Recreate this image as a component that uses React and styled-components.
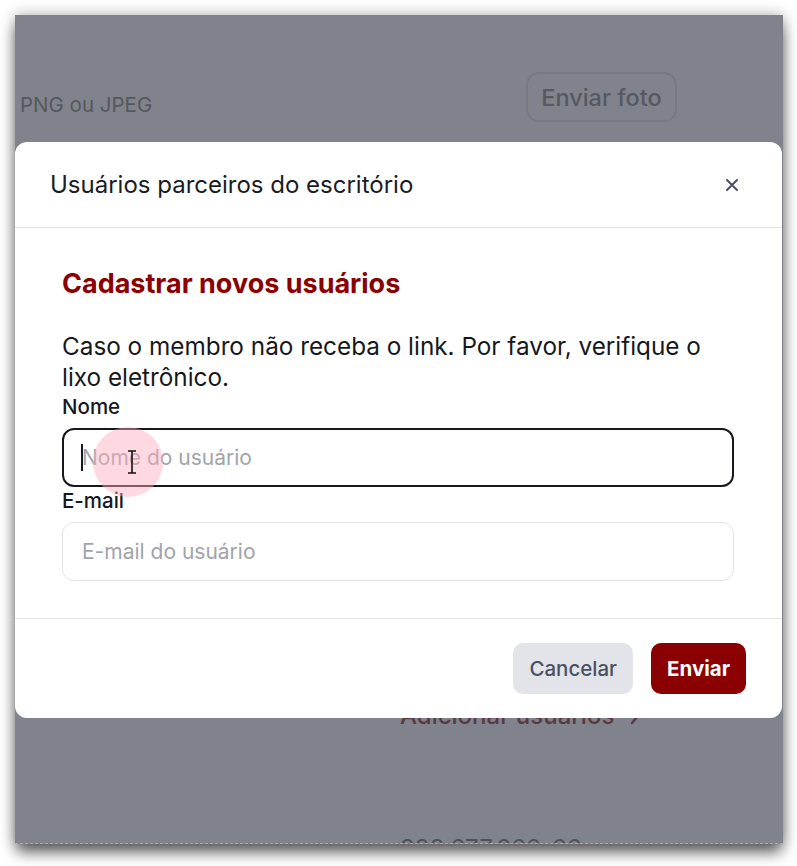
import React from "react";
import styled, { createGlobalStyle } from "styled-components";

const Global = createGlobalStyle`
  html, body { margin: 0; padding: 0; background: #ffffff; }
  body { font-family: Inter, "Noto Sans", sans-serif; }
  * { box-sizing: border-box; }
`;

const Stage = styled.div`
  width: 797px;
  height: 866px;
  padding: 15px 14px 0 15px;
  background: #ffffff;
`;

const Window = styled.div`
  position: relative;
  width: 768px;
  height: 829px;
  overflow: hidden;
  background: #80838b;
  border-bottom: 1px dashed #a6a9af;
  box-shadow: 0 10px 14px -2px rgba(0, 0, 0, 0.6), 0 0 14px rgba(0, 0, 0, 0.3);
  display: flex;
  flex-direction: column;
`;

const TopRow = styled.div`
  margin-top: 57px;
  height: 50px;
  display: flex;
  justify-content: space-between;
  padding: 0 106px 0 5px;
`;

const FaintText = styled.span`
  align-self: flex-end;
  margin-bottom: 5px;
  font-size: 20.5px;
  line-height: 24px;
  color: #55585f;
`;

const GhostButton = styled.div`
  width: 151px;
  height: 50px;
  border: 2px solid #767980;
  border-radius: 13px;
  display: flex;
  align-items: center;
  justify-content: center;
  font-size: 23.5px;
  font-weight: 500;
  color: #56595f;
`;

const LinkRow = styled.div`
  margin-top: 580px;
  padding-left: 385px;
  display: flex;
  align-items: center;
  gap: 14px;
  font-size: 24px;
  font-weight: 500;
  line-height: 28px;
  color: #5a3a42;
`;

const Divider = styled.div`
  margin-top: 43px;
  height: 1px;
  background: #74777f;
`;

const CpfRow = styled.div`
  margin-top: 62px;
  padding-left: 385px;
  font-size: 24px;
  line-height: 28px;
  color: #4f525a;
`;

const Modal = styled.div`
  position: absolute;
  top: 127px;
  left: 0;
  width: 767px;
  background: #ffffff;
  border-radius: 12px;
  display: flex;
  flex-direction: column;
`;

const Header = styled.div`
  height: 86px;
  padding: 0 40px 0 35px;
  display: flex;
  align-items: center;
  justify-content: space-between;
  border-bottom: 1px solid #e4e4e7;
`;

const HeaderTitle = styled.h2`
  margin: 0;
  font-size: 24px;
  line-height: 30px;
  font-weight: 400;
  color: #1a1d24;
`;

const CloseButton = styled.button`
  border: 0;
  background: none;
  padding: 0;
  width: 20px;
  height: 20px;
  display: flex;
  align-items: center;
  justify-content: center;
  color: #4b5060;
`;

const Body = styled.div`
  height: 390px;
  padding: 41px 48px 0 47px;
  display: flex;
  flex-direction: column;
`;

const SectionTitle = styled.h3`
  margin: 0;
  font-size: 27px;
  line-height: 30px;
  font-weight: 700;
  color: #8b0000;
`;

const Description = styled.p`
  margin: 32px 0 0;
  font-size: 24.3px;
  line-height: 31px;
  color: #16181d;
`;

const Label = styled.label`
  display: block;
  margin-top: ${(p) => p.$top}px;
  font-size: 20.5px;
  line-height: 24px;
  font-weight: 500;
  color: #16181d;
`;

const FieldWrap = styled.div`
  position: relative;
  margin-top: 9px;
`;

const Input = styled.input`
  display: block;
  width: 100%;
  height: 59px;
  border: ${(p) => (p.$focused ? "2px solid #16181d" : "1px solid #e3e4e8")};
  border-radius: 12px;
  padding: 0 ${(p) => (p.$focused ? 18 : 19)}px;
  font-family: Inter, sans-serif;
  font-size: 21px;
  color: #16181d;
  outline: none;
  background: #ffffff;
  &::placeholder { color: #a1a4ab; }
`;

const Caret = styled.span`
  position: absolute;
  left: 19px;
  top: 16px;
  width: 2px;
  height: 27px;
  background: #16181d;
`;

const ClickHalo = styled.span`
  position: absolute;
  left: 31px;
  top: -1px;
  width: 70px;
  height: 70px;
  border-radius: 50%;
  background: rgba(255, 170, 190, 0.45);
  pointer-events: none;
`;

const Pointer = styled.svg`
  position: absolute;
  left: 63px;
  top: 22px;
`;

const Footer = styled.div`
  height: 100px;
  border-top: 1px solid #e4e4e7;
  display: flex;
  align-items: center;
  justify-content: flex-end;
  gap: 18px;
  padding-right: 36px;
`;

const Button = styled.button`
  height: 51px;
  padding: 0 16px;
  border: 0;
  border-radius: 10px;
  font-family: Inter, sans-serif;
  font-size: 20.5px;
  font-weight: ${(p) => (p.$primary ? 700 : 500)};
  background: ${(p) => (p.$primary ? "#8b0000" : "#e2e4e9")};
  color: ${(p) => (p.$primary ? "#ffffff" : "#4b5162")};
`;

export default function App() {
  return (
    <>
      <Global />
      <Stage>
        <Window>
          <TopRow>
            <FaintText>PNG ou JPEG</FaintText>
            <GhostButton>Enviar foto</GhostButton>
          </TopRow>
          <LinkRow>
            <span>Adicionar usuários</span>
            <svg width="14" height="20" viewBox="0 0 14 20" fill="none" stroke="#5a3a42" strokeWidth="2.5" strokeLinecap="round" strokeLinejoin="round">
              <path d="M4 3 L10 10 L4 17" />
            </svg>
          </LinkRow>
          <Divider />
          <CpfRow>333.677.666-66</CpfRow>

          <Modal>
            <Header>
              <HeaderTitle>Usuários parceiros do escritório</HeaderTitle>
              <CloseButton aria-label="Fechar">
                <svg width="14" height="14" viewBox="0 0 14 14" fill="none" stroke="currentColor" strokeWidth="2" strokeLinecap="round">
                  <path d="M2 2 L12 12 M12 2 L2 12" />
                </svg>
              </CloseButton>
            </Header>
            <Body>
              <SectionTitle>Cadastrar novos usuários</SectionTitle>
              <Description>
                Caso o membro não receba o link. Por favor, verifique o lixo eletrônico.
              </Description>
              <Label $top={2}>Nome</Label>
              <FieldWrap>
                <Input $focused placeholder="Nome do usuário" />
                <Caret />
                <ClickHalo />
                <Pointer width="14" height="24" viewBox="0 0 14 24" fill="none" stroke="#111" strokeWidth="1.6">
                  <path d="M3 1 H11 M7 1 V23 M3 23 H11" />
                </Pointer>
              </FieldWrap>
              <Label $top={2}>E-mail</Label>
              <FieldWrap>
                <Input placeholder="E-mail do usuário" />
              </FieldWrap>
            </Body>
            <Footer>
              <Button>Cancelar</Button>
              <Button $primary>Enviar</Button>
            </Footer>
          </Modal>
        </Window>
      </Stage>
    </>
  );
}
